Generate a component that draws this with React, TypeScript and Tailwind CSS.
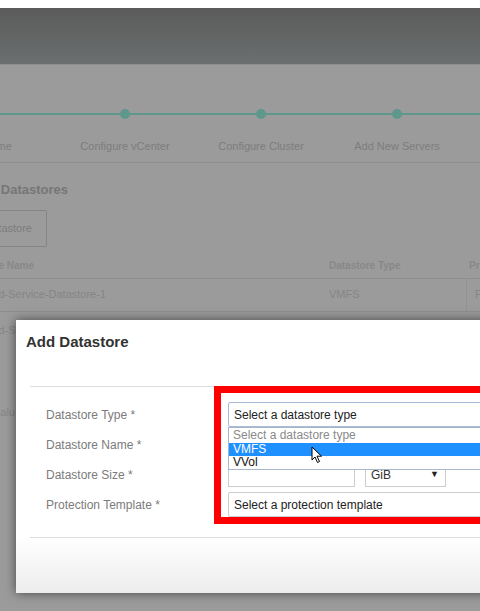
import React from "react"

const steps = ["Welcome", "Configure vCenter", "Configure Cluster", "Add New Servers", "Review"]

function Stepper() {
  return (
    <div className="relative h-[80px]">
      <div className="absolute left-0 right-0 top-[48px] h-[2px] bg-[#5f978c]" />
      <div className="flex ml-[-79px]">
        {steps.map((s, i) => (
          <div key={i} className="w-[136px] shrink-0 flex flex-col items-center pt-[44px]">
            <div className="w-[10px] h-[10px] rounded-full bg-[#5f978c] relative" />
            <div className="mt-[19px] text-[11px] text-[#7d7d7d] whitespace-nowrap">{s}</div>
          </div>
        ))}
      </div>
    </div>
  )
}

function Page() {
  return (
    <div className="bg-[#9b9b9b] h-[547px] border-t border-[#8f8f8f]">
      <Stepper />
      <div className="h-[18px] border-b border-[#8e8e8e]" />
      <div className="flex w-[68px] justify-end pt-[17px] text-[13px] font-bold text-[#767676] whitespace-nowrap">
        Existing Datastores
      </div>
      <div className="mt-[10px] ml-[-60px] w-[107px] flex justify-end items-center h-[37px] pr-[14px] border border-[#858585] rounded-[2px] text-[11px] text-[#7c7c7c] whitespace-nowrap">
        Add Datastore
      </div>
      <div className="mt-[6px] flex h-[26px] items-center text-[10px] font-bold text-[#888] border-b border-[#8e8e8e]">
        <div className="w-[34px] shrink-0 flex justify-end whitespace-nowrap">Datastore Name</div>
        <div className="w-[295px] shrink-0" />
        <div className="w-[140px] shrink-0 whitespace-nowrap">Datastore Type</div>
        <div>Pr</div>
      </div>
      <div className="flex h-[33px] items-center text-[11px] text-[#858585] border-b border-[#8e8e8e]">
        <div className="w-[106px] shrink-0 flex justify-end whitespace-nowrap">Cloud-Service-Datastore-1</div>
        <div className="w-[223px] shrink-0" />
        <div className="w-[138px] shrink-0 whitespace-nowrap border-r border-[#929292] h-full flex items-center">VMFS</div>
        <div className="pl-[8px]">P</div>
      </div>
      <div className="flex h-[38px] items-center text-[11px] text-[#858585]">
        <div className="w-[106px] shrink-0 flex justify-end whitespace-nowrap">Cloud-Service-Datastore-2</div>
      </div>
      <div className="mt-[54px] flex w-[15px] justify-end text-[11px] text-[#858585] whitespace-nowrap">Evalu</div>
    </div>
  )
}

function Field({ label, children }: { label: string; children: React.ReactNode }) {
  return (
    <div className="flex items-center h-[25px]">
      <div className="w-[212px] pl-[30px] text-[12px] text-[#7b7b7b] whitespace-nowrap">{label}</div>
      <div className="flex-1 flex gap-[10px]">{children}</div>
    </div>
  )
}

function Modal() {
  return (
    <div className="absolute left-[16px] top-[320px] w-[480px] h-[273px] bg-white shadow-[0_0_10px_rgba(0,0,0,0.55)] flex flex-col">
      <div className="h-[66px] pl-[10px] pt-[11px] text-[15px] font-bold text-[#333]">Add Datastore</div>
      <div className="ml-[14px] border-t border-[#dedede]" />
      <div className="relative flex flex-col gap-[5px] pt-[15px] pb-[20px]">
        <Field label="Datastore Type *">
          <div className="w-full h-[25px] border border-[#a9bbd6] rounded-[2px] flex items-center pl-[5px] text-[12px] text-[#222]">
            Select a datastore type
          </div>
        </Field>
        <Field label="Datastore Name *">
          <div className="w-full h-[25px] border border-[#ccc]" />
        </Field>
        <Field label="Datastore Size *">
          <div className="w-[127px] h-[25px] border border-[#ccc]" />
          <div className="w-[81px] h-[25px] border border-[#ccc] flex items-center justify-between pl-[5px] pr-[6px] text-[12px] text-[#333]">
            <span>GiB</span>
            <span className="text-[9px] text-[#222]">▼</span>
          </div>
        </Field>
        <Field label="Protection Template *">
          <div className="w-full h-[25px] border border-[#ccc] rounded-[2px] flex items-center pl-[5px] text-[12px] text-[#222]">
            Select a protection template
          </div>
        </Field>
        <div className="absolute left-[212px] top-[40px] w-[300px] h-[43px] bg-white border border-[#a8b6cc] text-[12px] leading-[13px]">
          <div className="h-[15px] pl-[4px] pt-[1px] text-[#8a8a8a]">Select a datastore type</div>
          <div className="h-[13px] pl-[4px] bg-[#1e90ff] text-white">VMFS</div>
          <div className="h-[13px] pl-[4px] text-[#111]">VVol</div>
        </div>
        <svg className="absolute left-[295px] top-[59px]" width="12" height="18" viewBox="0 0 12 18">
          <path d="M1 1 L1 14 L4 11 L6.5 16.5 L8.5 15.5 L6 10.2 L10.5 10.2 Z" fill="#fff" stroke="#000" strokeWidth="1" strokeLinejoin="round" />
        </svg>
      </div>
      <div className="ml-[14px] border-t border-[#dcdcdc]" />
      <div className="flex-1 bg-gradient-to-b from-white to-[#ededed]" />
      <div className="absolute left-[198px] top-[66px] w-[300px] h-[138px] border-[7px] border-[#ff0000]" />
    </div>
  )
}

export default function App() {
  return (
    <div className="relative w-[480px] h-[611px] overflow-hidden bg-white font-['Liberation_Sans',Arial,sans-serif]">
      <div className="h-[8px] bg-white" />
      <div className="h-[56px] bg-gradient-to-b from-[#5b5b5b] to-[#6b6f6f]" />
      <Page />
      <Modal />
    </div>
  )
}
